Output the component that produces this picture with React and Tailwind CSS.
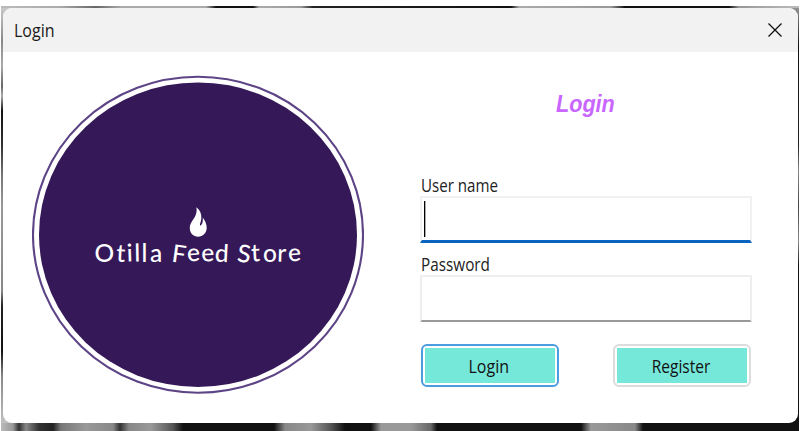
import React from "react";

const UI = "font-['Open_Sans','Noto_Sans',sans-serif] text-[18px] leading-[24px] whitespace-nowrap";

const TOP = "linear-gradient(90deg,#bbb 0px,#aaa 60px,#666 95px,#aaa 120px,#aaa 205px,#111 215px,#111 252px,#aaa 258px,#999 300px,#222 312px,#111 510px,#aaa 518px,#999 610px,#111 624px,#111 728px,#999 738px,#bbb 798px)";
const BOTTOM = "linear-gradient(90deg,#bbb 0px,#999 12px,#333 18px,#888 25px,#333 38px,#222 52px,#777 60px,#999 85px,#888 112px,#333 119px,#888 128px,#999 150px,#555 172px,#111 182px,#111 273px,#888 284px,#999 310px,#555 330px,#111 344px,#111 370px,#999 380px,#999 410px,#666 430px,#111 436px,#111 580px,#999 590px,#888 634px,#111 642px,#111 798px)";
const LEFT = "linear-gradient(180deg,#ccc 0px,#888 35px,#aaa 60px,#666 80px,#aaa 90px,#111 105px,#333 140px,#777 170px,#999 200px,#888 285px,#222 300px,#111 345px,#888 370px,#aaa 400px,#ccc 425px)";
const RIGHT = "linear-gradient(180deg,#999 0px,#666 15px,#111 40px,#222 140px,#888 165px,#444 200px,#888 235px,#111 260px,#111 425px)";

const photoEdges = {
  backgroundImage: [TOP, BOTTOM, LEFT, RIGHT].join(","),
  backgroundSize: "100% 2px,100% 8px,12px 100%,12px 100%",
  backgroundPosition: "0 0,0 100%,0 0,100% 0",
  backgroundRepeat: "no-repeat",
};

function Logo() {
  return (
    <svg width="332" height="320" viewBox="32 75 332 320" className="block shrink-0">
      <ellipse cx="198" cy="234.7" rx="165" ry="158" fill="#fff" stroke="#5d4486" strokeWidth="2.1" />
      <ellipse cx="198" cy="234.7" rx="159" ry="152.3" fill="#351858" />
      <path
        d="M196.400 207.200C200 210 201.800 214 201.300 218.500C201 222 199.800 223.500 199.900 225.600C202.300 225.500 203.200 221.500 202.700 217.500C205.200 220.500 206.800 224.500 206.700 228C206.600 233 202.800 236.700 198.200 236.700C193.200 236.700 189.800 233 189.800 228.300C189.800 223.500 192.300 221 194.500 217.500C196.500 214.300 197 211 196.400 207.200Z"
        fill="#fff"
      />
      <text
        x="94.500 116 127 134.500 141.500 150 161 171 187.500 201.500 214.500 228 236.500 251.500 263 277 288.500"
        y="261.500"
        rotate="0 3 -2 -1 0 0 0 8 -4 -2 3 0 7 -3 0 2 -4"
        fill="#fff"
        className="font-[Lato,sans-serif] text-[24.500px] font-medium"
      >
        Otilla Feed Store
      </text>
    </svg>
  );
}

export default function App() {
  return (
    <div className="h-[431px] w-[801px] overflow-hidden bg-white pt-[6px] pr-[2px] pl-px font-['Open_Sans',sans-serif]">
      <div className="h-[425px] px-[2px] pt-[2px] pb-[8px]" style={photoEdges}>
        <div className="flex h-[415px] w-[794.500px] flex-col overflow-hidden rounded-[9px] bg-white">
          <header className="flex h-[44px] shrink-0 items-center justify-between bg-[#f2f2f2] pr-[16px] pl-[11px]">
            <span className={UI + " origin-left scale-x-[0.890] text-[#1a1a1a]"}>Login</span>
            <svg width="14" height="14" viewBox="0 0 14 14" className="block">
              <path d="M.5.500 13.500 13.500M13.500.500.500 13.500" stroke="#111" strokeWidth="1.300" />
            </svg>
          </header>
          <main className="flex flex-1 pt-[23px] pl-[29px]">
            <Logo />
            <form className="ml-[55px] flex w-[334px] flex-col pt-[15px]">
              <h1 className="ml-[136.500px] h-[28px] w-fit origin-left scale-x-[0.900] font-['Liberation_Sans',Arial,sans-serif] text-[24px] leading-[28px] font-bold text-[#c966ff] italic">Login</h1>
              <label className={UI + " mt-[55px] ml-[2px] h-[23px] w-fit origin-left scale-x-[0.840] text-[#222]"}>User name</label>
              <div className="mr-px ml-px h-[47px] border-2 border-b-[3px] border-[#f1f1f1] border-b-[#0864bf] pt-[3px] pl-[2px]">
                <div className="h-[36px] w-px bg-black shadow-[1px_0_0_#aaa]" />
              </div>
              <label className={UI + " mt-[9px] ml-[2px] h-[23px] w-fit origin-left scale-x-[0.850] text-[#222]"}>Password</label>
              <div className="mr-px ml-px h-[47px] rounded-[2px] border-2 border-[#eee] border-b-[#999]" />
              <div className="mt-[22px] flex justify-between pr-[2px] pl-[2px]">
                <button type="button" className="h-[43px] w-[138px] rounded-[6px] border-2 border-[#4c9ce0] p-[2px]">
                  <span className="flex h-full items-center justify-center bg-[#76e8da] pr-[3px]">
                    <span className={UI + " scale-x-[0.890] text-[#111]"}>Login</span>
                  </span>
                </button>
                <button type="button" className="h-[43px] w-[138px] rounded-[6px] border-2 border-[#dcdcdc] p-[2px]">
                  <span className="flex h-full items-center justify-center bg-[#76e8da] pr-[2px]">
                    <span className={UI + " scale-x-[0.860] text-[#111]"}>Register</span>
                  </span>
                </button>
              </div>
            </form>
          </main>
        </div>
      </div>
    </div>
  );
}
